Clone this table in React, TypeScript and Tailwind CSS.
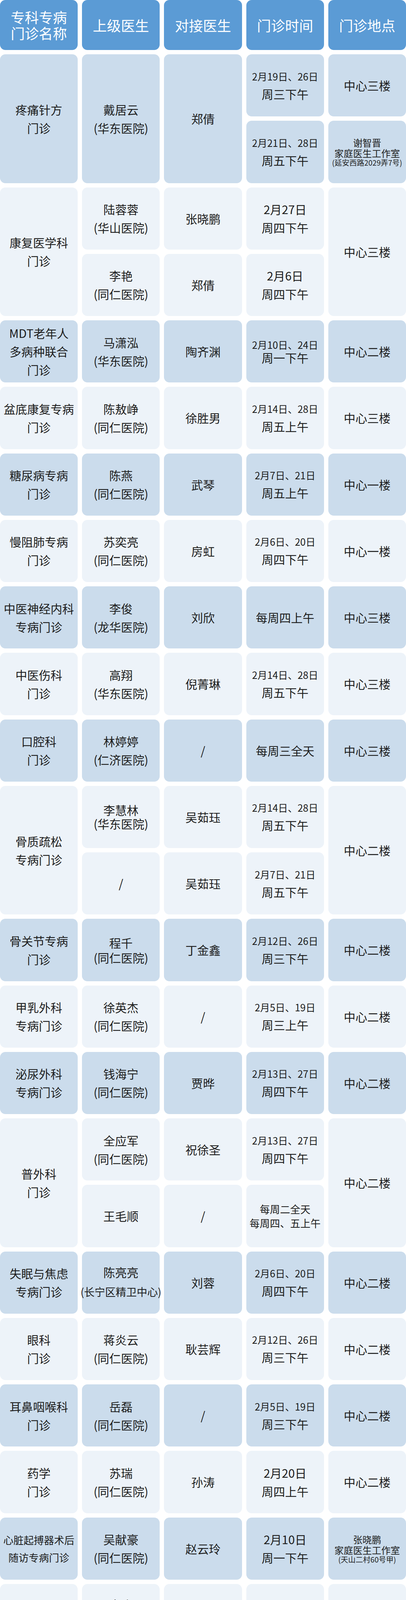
import React from 'react';

type Line = [string, string];
type Cell = { l: Line[]; span?: boolean };
type Row = { dark: boolean; cells: Cell[] };

// line styles (size + line box)
const M = 'text-[30px] leading-[47px]';
const D = 'text-[25px] leading-[43px]';
const S = 'text-[24px] leading-[27px]';
const A = 'text-[19px] leading-[21px]';
const N = 'text-[26px] leading-[45px]';
const W = 'text-[26px] leading-[36px]';
const MT = 'text-[30px] leading-[35px]';
const DT = 'text-[25px] leading-[32px]';
const H = 'text-[27px] leading-[53px]';
const T = 'text-[24px] leading-[53px]';
const K = 'text-[23px] leading-[39px]';

const main = (...t: string[]): Cell => ({ l: t.map((x) => [x, M] as Line) });
const span = (c: Cell): Cell => ({ ...c, span: true });
const date = (d: string, w: string): Cell => ({ l: [[d, D], [w, M]] });
const room = (name: string, addr: string): Cell => ({
  l: [[name, S], ['家庭医生工作室', S], [addr, A]],
});
const doc = (name: string, hosp: string, cls: string): Cell => ({ l: [[name, M], [hosp, cls]] });

const rows: Row[] = [
  {
    dark: true,
    cells: [
      span(main('疼痛针方', '门诊')),
      span(main('戴居云', '(华东医院)')),
      span(main('郑倩')),
      date('2月19日、26日', '周三下午'),
      main('中心三楼'),
      date('2月21日、28日', '周五下午'),
      room('谢智晋', '(延安西路2029弄7号)'),
    ],
  },
  {
    dark: false,
    cells: [
      span(main('康复医学科', '门诊')),
      main('陆蓉蓉', '(华山医院)'),
      main('张晓鹏'),
      main('2月27日', '周四下午'),
      span(main('中心三楼')),
      main('李艳', '(同仁医院)'),
      main('郑倩'),
      main('2月6日', '周四下午'),
    ],
  },
  {
    dark: true,
    cells: [
      main('MDT老年人', '多病种联合', '门诊'),
      main('马潇泓', '(华东医院)'),
      main('陶齐渊'),
      { l: [['2月10日、24日', DT], ['周一下午', MT]] },
      main('中心二楼'),
    ],
  },
  {
    dark: false,
    cells: [
      main('盆底康复专病', '门诊'),
      main('陈敖峥', '(同仁医院)'),
      main('徐胜男'),
      date('2月14日、28日', '周五上午'),
      main('中心三楼'),
    ],
  },
  {
    dark: true,
    cells: [
      main('糖尿病专病', '门诊'),
      main('陈燕', '(同仁医院)'),
      main('武琴'),
      date('2月7日、21日', '周五上午'),
      main('中心一楼'),
    ],
  },
  {
    dark: false,
    cells: [
      main('慢阻肺专病', '门诊'),
      main('苏奕亮', '(同仁医院)'),
      main('房虹'),
      date('2月6日、20日', '周四下午'),
      main('中心一楼'),
    ],
  },
  {
    dark: true,
    cells: [
      main('中医神经内科', '专病门诊'),
      main('李俊', '(龙华医院)'),
      main('刘欣'),
      main('每周四上午'),
      main('中心三楼'),
    ],
  },
  {
    dark: false,
    cells: [
      main('中医伤科', '门诊'),
      main('高翔', '(华东医院)'),
      main('倪菁琳'),
      date('2月14日、28日', '周五下午'),
      main('中心三楼'),
    ],
  },
  {
    dark: true,
    cells: [
      main('口腔科', '门诊'),
      main('林婷婷', '(仁济医院)'),
      main('/'),
      main('每周三全天'),
      main('中心三楼'),
    ],
  },
  {
    dark: false,
    cells: [
      span(main('骨质疏松', '专病门诊')),
      { l: [['李慧林', MT], ['(华东医院)', MT]] },
      main('吴茹珏'),
      date('2月14日、28日', '周五下午'),
      span(main('中心二楼')),
      main('/'),
      main('吴茹珏'),
      date('2月7日、21日', '周五下午'),
    ],
  },
  {
    dark: true,
    cells: [
      main('骨关节专病', '门诊'),
      { l: [['程千', 'text-[30px] leading-[38px]'], ['(同仁医院)', 'text-[30px] leading-[38px]']] },
      main('丁金鑫'),
      date('2月12日、26日', '周三下午'),
      main('中心二楼'),
    ],
  },
  {
    dark: false,
    cells: [
      main('甲乳外科', '专病门诊'),
      main('徐英杰', '(同仁医院)'),
      main('/'),
      date('2月5日、19日', '周三上午'),
      main('中心二楼'),
    ],
  },
  {
    dark: true,
    cells: [
      main('泌尿外科', '专病门诊'),
      main('钱海宁', '(同仁医院)'),
      main('贾晔'),
      date('2月13日、27日', '周四下午'),
      main('中心二楼'),
    ],
  },
  {
    dark: false,
    cells: [
      span(main('普外科', '门诊')),
      main('全应军', '(同仁医院)'),
      main('祝徐圣'),
      date('2月13日、27日', '周四下午'),
      span(main('中心二楼')),
      main('王毛顺'),
      main('/'),
      { l: [['每周二全天', W], ['每周四、五上午', W]] },
    ],
  },
  {
    dark: true,
    cells: [
      main('失眠与焦虑', '专病门诊'),
      doc('陈亮亮', '(长宁区精卫中心)', H),
      main('刘蓉'),
      date('2月6日、20日', '周四下午'),
      main('中心二楼'),
    ],
  },
  {
    dark: false,
    cells: [
      main('眼科', '门诊'),
      main('蒋炎云', '(同仁医院)'),
      main('耿芸辉'),
      date('2月12日、26日', '周三下午'),
      main('中心二楼'),
    ],
  },
  {
    dark: true,
    cells: [
      main('耳鼻咽喉科', '门诊'),
      main('岳磊', '(同仁医院)'),
      main('/'),
      date('2月5日、19日', '周三下午'),
      main('中心二楼'),
    ],
  },
  {
    dark: false,
    cells: [
      main('药学', '门诊'),
      main('苏瑞', '(同仁医院)'),
      main('孙涛'),
      main('2月20日', '周四上午'),
      main('中心二楼'),
    ],
  },
  {
    dark: true,
    cells: [
      { l: [['心脏起搏器术后', N], ['随访专病门诊', N]] },
      main('吴献豪', '(同仁医院)'),
      main('赵云玲'),
      main('2月10日', '周一下午'),
      room('张晓鹏', '(天山二村60号甲)'),
    ],
  },
  {
    dark: false,
    cells: [
      main('腰突症', '专病门诊'),
      doc('崔晓', '(天山中医医院)', T),
      main('谢智晋'),
      main('2月27日', '周四下午'),
      room('谢智晋', '(延安西路2029弄7号)'),
    ],
  },
  {
    dark: true,
    cells: [
      main('中医肾脏', '专病门诊'),
      main('李交', '(龙华医院)'),
      main('谢智晋'),
      main('2月11日', '周二下午'),
      room('谢智晋', '(延安西路2029弄7号)'),
    ],
  },
  {
    dark: false,
    cells: [
      main('中医内科', '门诊'),
      doc('蔡浦玉', '(天山中医医院)', T),
      main('/'),
      main('每周五上午'),
      main('中心三楼'),
    ],
  },
  {
    dark: true,
    cells: [
      main('儿保', '门诊'),
      doc('龚建梅', '(长宁区妇幼保健院)', K),
      main('/'),
      main('每周二上午'),
      main('中心一楼'),
    ],
  },
];

const headers: string[][] = [['专科专病', '门诊名称'], ['上级医生'], ['对接医生'], ['门诊时间'], ['门诊地点']];

export default function App() {
  return (
    <div className="w-[1040px] h-[4732px] overflow-hidden bg-white font-['Noto_Sans_CJK_SC','Noto_Sans',sans-serif]">
      <div className="grid grid-cols-5 grid-rows-[128px_repeat(27,159.25px)] gap-[11px]">
        {headers.map((h, i) => (
          <div
            key={'h' + i}
            className="flex flex-col items-center justify-center rounded-[14px] bg-[#5b9bd5] text-white text-[36px] leading-[41px] whitespace-nowrap"
          >
            {h.map((t) => (
              <span key={t}>{t}</span>
            ))}
          </div>
        ))}
        {rows.map((r, ri) =>
          r.cells.map((c, ci) => (
            <div
              key={ri + '-' + ci}
              className={`flex flex-col items-center justify-center text-center rounded-[14px] text-[#1c1c1c] whitespace-nowrap ${
                r.dark ? 'bg-[#cbdcec]' : 'bg-[#edf3f9]'
              } ${c.span ? 'row-span-2' : ''}`}
            >
              {c.l.map(([t, cls], li) => (
                <span key={li} className={`block ${cls}`}>
                  {t}
                </span>
              ))}
            </div>
          )),
        )}
      </div>
    </div>
  );
}
